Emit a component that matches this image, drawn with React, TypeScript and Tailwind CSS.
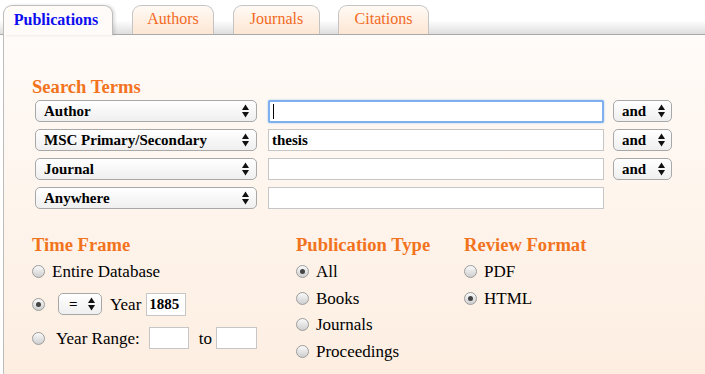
import React from "react";

function Arrows() {
  return (
    <svg width="7" height="14" viewBox="0 0 7 14" className="shrink-0">
      <polygon points="0,6 3.5,0.5 7,6" fill="#111" />
      <polygon points="0,8 7,8 3.5,13.5" fill="#111" />
    </svg>
  );
}

function Sel({ label, className }: { label: string; className: string }) {
  return (
    <div
      className={
        "flex items-center justify-between rounded-[5px] border border-[#a8a8a8] bg-linear-to-b from-white to-[#efefef] text-[15px] font-bold text-black " +
        className
      }
    >
      <span className="leading-none">{label}</span>
      <Arrows />
    </div>
  );
}

function TextBox({ value, className }: { value?: string; className: string }) {
  return (
    <div className={"flex items-center border border-[#c6c6c6] bg-white text-[15px] font-bold " + className}>
      {value}
    </div>
  );
}

function Radio({ checked }: { checked?: boolean }) {
  return (
    <span className="flex h-[13px] w-[13px] shrink-0 items-center justify-center rounded-full border border-[#9c9c9c] bg-linear-to-b from-[#fafafa] to-[#cfcfcf]">
      {checked && <span className="h-[5px] w-[5px] rounded-full bg-[#444]" />}
    </span>
  );
}

function Option({ label, checked }: { label: string; checked?: boolean }) {
  return (
    <div className="flex h-[26.7px] items-center gap-[7px]">
      <Radio checked={checked} />
      <span className="text-[17px] leading-none">{label}</span>
    </div>
  );
}

const heading = "text-[18.6px] font-bold leading-[22px] text-[#f2731d]";

export default function App() {
  const rows = [
    { field: "Author", value: "", focus: true, op: true },
    { field: "MSC Primary/Secondary", value: "thesis", op: true },
    { field: "Journal", value: "", op: true },
    { field: "Anywhere", value: "", op: false },
  ];

  return (
    <div className="h-[374px] w-[705px] overflow-hidden bg-white font-['Liberation_Serif',serif] text-black">
      {/* TABS */}
      <div className="flex h-[35px] items-end border-b border-[#a9a9a9] bg-linear-to-b from-white from-60% to-[#dedede] pl-[3px]">
        <div className="z-10 -mb-px flex h-[30px] w-[110px] items-center justify-center rounded-t-[9px] border border-b-0 border-[#bdbdbd] bg-[#fffbf8] pb-[2px] pr-[4px] text-[16px] font-bold text-[#0d0df0] shadow-[2px_0_3px_rgba(0,0,0,0.12)]">
          Publications
        </div>
        <div className="ml-[19px] flex h-[29px] w-[82px] items-center justify-center rounded-t-[9px] border border-b-0 border-[#c4c4c4] bg-linear-to-b from-[#fffaf5] to-[#fde6d3] pb-[2px] text-[16px] text-[#f26a1f]">
          Authors
        </div>
        <div className="ml-[19px] flex h-[29px] w-[87px] items-center justify-center rounded-t-[9px] border border-b-0 border-[#c4c4c4] bg-linear-to-b from-[#fffaf5] to-[#fde6d3] pb-[2px] text-[16px] text-[#f26a1f]">
          Journals
        </div>
        <div className="ml-[18px] flex h-[29px] w-[91px] items-center justify-center rounded-t-[9px] border border-b-0 border-[#c4c4c4] bg-linear-to-b from-[#fffaf5] to-[#fde6d3] pb-[2px] text-[16px] text-[#f26a1f]">
          Citations
        </div>
      </div>

      {/* PANEL */}
      <div className="ml-[3px] h-[339px] border-l border-[#bcbcbc] bg-linear-to-b from-[#fffbf8] to-[#fdeee1] pl-[28px] pt-[41px]">
        {/* SEARCH TERMS */}
        <div className={heading}>Search Terms</div>
        <div className="ml-[3px] mt-[2px] flex flex-col gap-[7px]">
          {rows.map((r) => (
            <div key={r.field} className="flex h-[22px] items-center">
              <Sel label={r.field} className="h-[22px] w-[222px] pl-[8px] pr-[7px]" />
              {r.focus ? (
                <div className="ml-[11px] flex h-[23px] w-[336px] items-center rounded-[2px] border-2 border-[#7fb0ee] bg-white pl-[3px] shadow-[0_0_2px_#9cc3f3]">
                  <span className="h-[15px] w-px bg-black" />
                </div>
              ) : (
                <TextBox value={r.value} className="ml-[11px] h-[22px] w-[336px] pl-[3px]" />
              )}
              {r.op && <Sel label="and" className="ml-[9px] h-[22px] w-[59px] pl-[8px] pr-[6px]" />}
            </div>
          ))}
        </div>

        {/* BOTTOM */}
        <div className="mt-[25px] flex">
          <div className="w-[264px]">
            <div className={heading}>Time Frame</div>
            <div className="mt-[2px] flex h-[26px] items-center gap-[7px]">
              <Radio />
              <span className="text-[17px] leading-none">Entire Database</span>
            </div>
            <div className="mt-[5px] flex h-[30px] items-center">
              <Radio checked />
              <Sel label="=" className="ml-[13px] h-[22px] w-[44px] pl-[10px] pr-[6px]" />
              <span className="ml-[8px] text-[17px] leading-none">Year</span>
              <TextBox value="1885" className="ml-[5px] h-[23px] w-[40px] pl-[2px]" />
            </div>
            <div className="mt-[4px] flex h-[30px] items-center">
              <Radio />
              <span className="ml-[11px] text-[17px] leading-none">Year Range:</span>
              <TextBox className="ml-[9px] h-[22px] w-[40px]" />
              <span className="ml-[10px] text-[17px] leading-none">to</span>
              <TextBox className="ml-[4px] h-[22px] w-[41px]" />
            </div>
          </div>
          <div className="w-[168px]">
            <div className={heading}>Publication Type</div>
            <div className="mt-[2px]">
              <Option label="All" checked />
              <Option label="Books" />
              <Option label="Journals" />
              <Option label="Proceedings" />
            </div>
          </div>
          <div>
            <div className={heading}>Review Format</div>
            <div className="mt-[2px]">
              <Option label="PDF" />
              <Option label="HTML" checked />
            </div>
          </div>
        </div>
      </div>
    </div>
  );
}
